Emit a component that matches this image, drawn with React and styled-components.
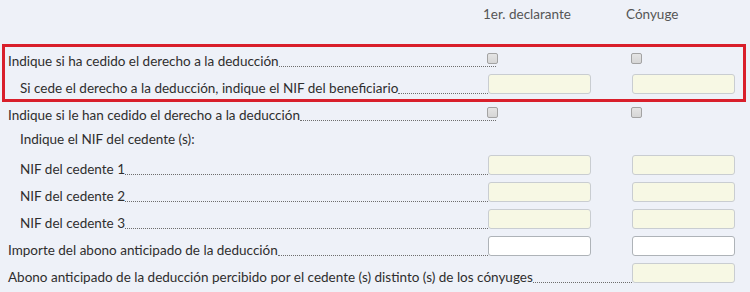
import React from "react";
import styled, { createGlobalStyle } from "styled-components";

const GlobalStyle = createGlobalStyle`
  html, body {
    margin: 0;
    padding: 0;
    background: #eef1f8;
  }
  body {
    font-family: Lato, "Open Sans", sans-serif;
    color: #2e2e2e;
  }
`;

const Page = styled.div`
  position: relative;
  width: 750px;
  height: 292px;
  overflow: hidden;
  background: #eef1f8;
  box-sizing: border-box;
  padding: 0 15px 0 8px;
`;

const Header = styled.div`
  display: flex;
  height: 28px;
  align-items: center;
  margin-bottom: 19px;
  font-size: 13.5px;
  color: #555;

  span:first-child {
    margin-left: 475px;
    width: 143px;
  }
`;

const Rows = styled.div`
  display: flex;
  flex-direction: column;
  gap: 7px;
`;

const Row = styled.div`
  display: flex;
  align-items: flex-end;
  height: 20px;
  font-size: 13.5px;
`;

const Label = styled.div`
  flex: 1;
  display: flex;
  align-items: flex-end;
  min-width: 0;
  padding-left: ${(p) => (p.$indent ? "12px" : "0")};
  align-self: ${(p) => (p.$plain ? "center" : "flex-end")};
`;

const Text = styled.span`
  white-space: nowrap;
  line-height: 15px;
  margin-bottom: ${(p) => (p.$plain ? "-2px" : "-2px")};
`;

const Leader = styled.span`
  flex: 1;
  height: 3px;
  border-bottom: 1px dotted #6d6d6d;
  margin-right: ${(p) => (p.$check ? "-8px" : "0")};
`;

const Cell = styled.div`
  width: 103px;
  height: 20px;
  display: flex;
  align-items: flex-end;

  & + & {
    margin-left: 41px;
  }
`;

const Check = styled.span`
  width: 9px;
  height: 9px;
  margin: 0 0 3px -1px;
  border: 1px solid #a3a3a3;
  border-radius: 2px;
  background: linear-gradient(#e4e4e4, #d6d6d6);
`;

const Input = styled.div`
  width: 103px;
  height: 20px;
  box-sizing: border-box;
  border: 1px solid ${(p) => (p.$white ? "#aeb3b8" : "#c9cdd1")};
  border-radius: 3px;
  background: ${(p) => (p.$white ? "#ffffff" : "#f7f8e4")};
`;

const Highlight = styled.div`
  position: absolute;
  left: 2px;
  top: 44px;
  width: 744px;
  height: 58px;
  box-sizing: border-box;
  border: 3px solid #d91f2b;
  pointer-events: none;
`;

const rows = [
  { text: "Indique si ha cedido el derecho a la deducción", kind: "check" },
  {
    text: "Si cede el derecho a la deducción, indique el NIF del beneficiario",
    indent: true,
    kind: "field",
  },
  { text: "Indique si le han cedido el derecho a la deducción", kind: "check" },
  { text: "Indique el NIF del cedente (s):", indent: true, kind: "none" },
  { text: "NIF del cedente 1", indent: true, kind: "field" },
  { text: "NIF del cedente 2", indent: true, kind: "field" },
  { text: "NIF del cedente 3", indent: true, kind: "field" },
  { text: "Importe del abono anticipado de la deducción", kind: "white" },
  {
    text: "Abono anticipado de la deducción percibido por el cedente (s) distinto (s) de los cónyuges",
    kind: "second",
  },
];

function Cells({ kind }) {
  if (kind === "none") return null;
  if (kind === "check")
    return (
      <>
        <Cell>
          <Check />
        </Cell>
        <Cell>
          <Check />
        </Cell>
      </>
    );
  if (kind === "second")
    return (
      <Cell>
        <Input />
      </Cell>
    );
  const white = kind === "white";
  return (
    <>
      <Cell>
        <Input $white={white} />
      </Cell>
      <Cell>
        <Input $white={white} />
      </Cell>
    </>
  );
}

export default function App() {
  return (
    <>
      <GlobalStyle />
      <Page>
        <Header>
          <span>1er. declarante</span>
          <span>Cónyuge</span>
        </Header>
        <Rows>
          {rows.map((r) => (
            <Row key={r.text}>
              <Label $indent={r.indent} $plain={r.kind === "none"}>
                <Text $plain={r.kind === "none"}>{r.text}</Text>
                {r.kind !== "none" && <Leader $check={r.kind === "check"} />}
              </Label>
              <Cells kind={r.kind} />
            </Row>
          ))}
        </Rows>
        <Highlight />
      </Page>
    </>
  );
}
